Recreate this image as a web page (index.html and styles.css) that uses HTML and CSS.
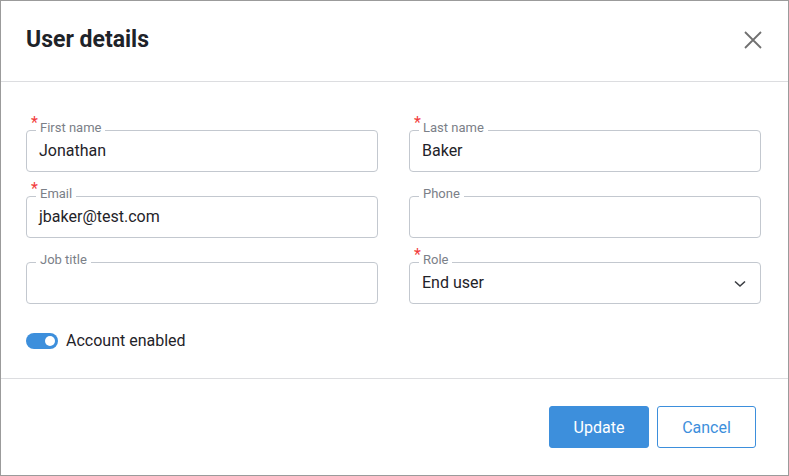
FILE: index.html
```html
<!DOCTYPE html>
<html lang="en">
<head>
<meta charset="utf-8">
<title>User details</title>
<link rel="stylesheet" href="styles.css">
</head>
<body>
<div class="dialog">
  <header class="dialog-header">
    <h1 class="dialog-title">User details</h1>
    <button class="close-btn" aria-label="Close">
      <svg width="18" height="18" viewBox="0 0 18 18"><path d="M1 1 L17 17 M17 1 L1 17" stroke="#707070" stroke-width="1.8" fill="none"/></svg>
    </button>
  </header>
  <section class="dialog-body">
    <div class="form-grid">
      <div class="field">
        <span class="field-label"><span class="req">*</span>First name</span>
        <span class="field-value">Jonathan</span>
      </div>
      <div class="field">
        <span class="field-label"><span class="req">*</span>Last name</span>
        <span class="field-value">Baker</span>
      </div>
      <div class="field">
        <span class="field-label"><span class="req">*</span>Email</span>
        <span class="field-value">jbaker@test.com</span>
      </div>
      <div class="field">
        <span class="field-label">Phone</span>
        <span class="field-value"></span>
      </div>
      <div class="field">
        <span class="field-label">Job title</span>
        <span class="field-value"></span>
      </div>
      <div class="field select">
        <span class="field-label"><span class="req">*</span>Role</span>
        <span class="field-value">End user</span>
        <svg class="chevron" width="12" height="8" viewBox="0 0 12 8"><path d="M1 1.5 L6 6 L11 1.5" stroke="#3a3d42" stroke-width="1.6" fill="none"/></svg>
      </div>
    </div>
    <div class="toggle-row">
      <span class="toggle"><span class="knob"></span></span>
      <span class="toggle-label">Account enabled</span>
    </div>
  </section>
  <footer class="dialog-footer">
    <button class="btn btn-primary">Update</button>
    <button class="btn btn-outline">Cancel</button>
  </footer>
</div>
</body>
</html>
```
FILE: styles.css
```css
* { box-sizing: border-box; }
html, body { margin: 0; padding: 0; }
body {
  font-family: Roboto, "Liberation Sans", Arial, sans-serif;
  color: #1f2329;
  background: #fff;
}
.dialog {
  width: 789px;
  height: 476px;
  border: 1px solid #9b9b9b;
  display: flex;
  flex-direction: column;
  background: #fff;
}
.dialog-header {
  height: 81px;
  border-bottom: 1px solid #dcdde0;
  display: flex;
  align-items: center;
  justify-content: space-between;
  padding: 0 25px 0 25px;
}
.dialog-title {
  margin: 0;
  font-size: 23px;
  font-weight: 700;
  color: #1e2329;
  letter-spacing: 0;
  padding-bottom: 4px;
}
.close-btn {
  border: 0;
  background: none;
  padding: 0;
  width: 18px;
  height: 18px;
  display: flex;
  margin-right: 1px;
  margin-bottom: 2px;
}
.dialog-body {
  height: 297px;
  border-bottom: 1px solid #dcdde0;
  padding: 48px 26px 0 25px;
}
.form-grid {
  display: grid;
  grid-template-columns: 352px 352px;
  column-gap: 31px;
  row-gap: 24px;
}
.field {
  position: relative;
  height: 42px;
  border: 1px solid #c3c8cf;
  border-radius: 4px;
  display: flex;
  align-items: center;
  padding: 0 12px;
}
.field-label {
  position: absolute;
  top: -11px;
  left: 9px;
  padding: 0 4px;
  background: #fff;
  font-size: 13px;
  line-height: 16px;
  color: #7b8088;
}
.req {
  position: absolute;
  left: -5px;
  top: -5px;
  color: #f23c3c;
  font-size: 16px;
  line-height: 16px;
}
.field-value {
  font-size: 16px;
  color: #1f2329;
  padding-bottom: 2px;
}
.select { justify-content: space-between; }
.chevron { margin-right: 2px; margin-top: 1px; }
.toggle-row {
  display: flex;
  align-items: center;
  gap: 8px;
  margin-top: 27px;
}
.toggle {
  width: 32px;
  height: 16px;
  border-radius: 8px;
  background: #3d8fdc;
  display: flex;
  align-items: center;
  justify-content: flex-end;
  padding-right: 3px;
}
.knob {
  width: 10px;
  height: 10px;
  border-radius: 50%;
  background: #fff;
}
.toggle-label {
  font-size: 16px;
  color: #1f2329;
}
.dialog-footer {
  flex: 1;
  display: flex;
  align-items: center;
  justify-content: flex-end;
  gap: 8px;
  padding: 0 32px 0 0;
}
.btn {
  height: 42px;
  border-radius: 3px;
  font-family: Roboto, "Liberation Sans", Arial, sans-serif;
  font-size: 16px;
  padding: 0 23px;
  border: 1px solid #3d8fdc;
}
.btn-primary {
  background: #3d8fdc;
  color: #fff;
  width: 100px;
}
.btn-outline {
  background: #fff;
  color: #3d8fdc;
  width: 99px;
}
```
